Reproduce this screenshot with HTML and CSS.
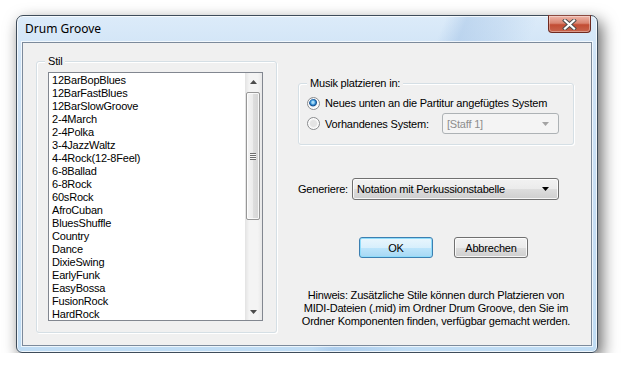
FILE: index.html
```html
<!DOCTYPE html>
<html lang="de">
<head>
  <meta charset="UTF-8">
  <title>Drum Groove</title>
  <link rel="stylesheet" href="styles.css">
</head>
<body>
  <div class="window">
    <div class="titlebar">
      <span class="title">Drum Groove</span>
      <button class="close" title="Schließen">
        <svg width="15" height="11" viewBox="0 0 15 11">
          <path d="M3 1.5 L12 9.5 M12 1.5 L3 9.5" stroke="#4b4b4b" stroke-width="4" stroke-linecap="square"/>
          <path d="M3 1.5 L12 9.5 M12 1.5 L3 9.5" stroke="#fff" stroke-width="2.2" stroke-linecap="square"/>
        </svg>
      </button>
    </div>

    <div class="client">
      <div class="col-left">
        <div class="group group-style">
          <div class="group-title">Stil</div>
          <div class="listbox">
            <ul class="items">
              <li>12BarBopBlues</li>
              <li>12BarFastBlues</li>
              <li>12BarSlowGroove</li>
              <li>2-4March</li>
              <li>2-4Polka</li>
              <li>3-4JazzWaltz</li>
              <li>4-4Rock(12-8Feel)</li>
              <li>6-8Ballad</li>
              <li>6-8Rock</li>
              <li>60sRock</li>
              <li>AfroCuban</li>
              <li>BluesShuffle</li>
              <li>Country</li>
              <li>Dance</li>
              <li>DixieSwing</li>
              <li>EarlyFunk</li>
              <li>EasyBossa</li>
              <li>FusionRock</li>
              <li>HardRock</li>
            </ul>
            <div class="scrollbar">
              <div class="sb-btn">
                <svg width="7" height="4" viewBox="0 0 7 4"><path d="M0 4 L3.5 0 L7 4 Z" fill="#4d4d4d"/></svg>
              </div>
              <div class="sb-track">
                <div class="sb-thumb"><span class="grip"></span></div>
              </div>
              <div class="sb-btn">
                <svg width="7" height="4" viewBox="0 0 7 4"><path d="M0 0 L7 0 L3.5 4 Z" fill="#4d4d4d"/></svg>
              </div>
            </div>
          </div>
        </div>
      </div>

      <div class="col-right">
        <div class="group group-place">
          <div class="group-title">Musik platzieren in:</div>
          <div class="radio-row radio-first">
            <span class="radio checked"></span>
            <span>Neues unten an die Partitur angefügtes System</span>
          </div>
          <div class="radio-row">
            <span class="radio"></span>
            <span class="radio-label">Vorhandenes System:</span>
            <div class="combo combo-disabled">
              <span>[Staff 1]</span>
              <svg width="7" height="4" viewBox="0 0 7 4"><path d="M0 0 L7 0 L3.5 4 Z" fill="#a3a3a3"/></svg>
            </div>
          </div>
        </div>

        <div class="field-row">
          <span class="field-label">Generiere:</span>
          <div class="combo combo-wide">
            <span>Notation mit Perkussionstabelle</span>
            <svg width="7" height="4" viewBox="0 0 7 4"><path d="M0 0 L7 0 L3.5 4 Z" fill="#000"/></svg>
          </div>
        </div>

        <div class="button-row">
          <button class="btn btn-default">OK</button>
          <button class="btn">Abbrechen</button>
        </div>

        <p class="hint">Hinweis: Zusätzliche Stile können durch Platzieren von<br>MIDI-Dateien (.mid) im Ordner Drum Groove, den Sie im<br>Ordner Komponenten finden, verfügbar gemacht werden.</p>
      </div>
    </div>
  </div>
</body>
</html>
```

FILE: styles.css
```css
body {
  margin: 0;
  background: #fff;
  font-family: "Liberation Sans", Arial, sans-serif;
  font-size: 11px;
  letter-spacing: -0.2px;
  color: #000;
}

.window {
  box-sizing: border-box;
  width: 582px;
  height: 338px;
  margin: 15px 0 0 16px;
  border: 1px solid #3e4c5a;
  border-radius: 7px 7px 6px 6px;
  background:
    linear-gradient(112deg, transparent 60%, rgba(140, 178, 222, 0.35) 63%, rgba(140, 178, 222, 0.2) 68%, transparent 73%),
    linear-gradient(#dcebf9, #cfe3f6 12%, #c6ddf3 60%, #bfdcf4);
  box-shadow: 4px 6px 16px rgba(0, 0, 0, 0.6), inset 0 0 0 1px rgba(255, 255, 255, 0.75);
  display: flex;
  flex-direction: column;
}

.titlebar {
  height: 26px;
  display: flex;
  justify-content: space-between;
  align-items: flex-start;
}

.title {
  font-family: "Noto Sans", sans-serif;
  font-size: 12px;
  letter-spacing: 0;
  line-height: 26px;
  padding-left: 8px;
}

.close {
  width: 43px;
  height: 18px;
  margin: -1px 6px 0 0;
  padding: 0;
  border: 1px solid #6f2a20;
  border-top-color: #8a4a40;
  border-radius: 0 0 4px 4px;
  background: linear-gradient(#efb5a8 0%, #d98571 45%, #c24d34 55%, #c8644c 100%);
  box-shadow: inset 0 0 0 1px rgba(255, 255, 255, 0.35);
  display: flex;
  align-items: center;
  justify-content: center;
}

.client {
  box-sizing: border-box;
  height: 304px;
  margin: 0 5px;
  border: 1px solid #7c8a9b;
  background: #f0f0f0;
  box-shadow: 0 0 0 1px rgba(255, 255, 255, 0.7);
  display: flex;
  padding-left: 13px;
  gap: 21px;
}

.group {
  border: 1px solid #d5dfe5;
  border-radius: 3px;
  box-shadow: inset 1px 1px 0 #fff, 1px 1px 0 #fff;
}

.group-title {
  display: table;
  margin: -7px 0 0;
  padding: 0 3px;
  line-height: 13px;
  background: #f0f0f0;
}

.col-left {
  width: 241px;
}

.group-style {
  margin-top: 18px;
  padding: 0 0 11px 11px;
}

.group-style .group-title {
  margin-left: -3px;
}

.listbox {
  box-sizing: border-box;
  width: 215px;
  height: 249px;
  margin-top: 4px;
  border: 1px solid #828790;
  background: #fff;
  display: flex;
  overflow: hidden;
}

.items {
  flex: 1;
  margin: 0;
  padding: 1px 0 0 3px;
  list-style: none;
}

.items li {
  height: 13px;
  line-height: 13px;
  white-space: nowrap;
}

.scrollbar {
  width: 17px;
  display: flex;
  flex-direction: column;
  background: linear-gradient(90deg, #e3e3e3, #f4f4f4 25%, #f4f4f4 75%, #e8e8e8);
}

.sb-btn {
  height: 17px;
  display: flex;
  align-items: center;
  justify-content: center;
}

.sb-track {
  flex: 1;
}

.sb-thumb {
  box-sizing: border-box;
  height: 128px;
  margin: 2px 2px 0 1px;
  border: 1px solid #979797;
  border-radius: 2px;
  background: linear-gradient(90deg, #f4f4f4, #ececec 50%, #dedede 51%, #d5d5d5);
  box-shadow: inset 0 0 0 1px rgba(255, 255, 255, 0.8);
  display: flex;
  align-items: center;
  justify-content: center;
}

.grip {
  width: 6px;
  height: 7px;
  background: repeating-linear-gradient(#6f6f6f 0 1px, #f8f8f8 1px 2px);
}

.col-right {
  width: 276px;
}

.group-place {
  margin-top: 40px;
  padding: 0 0 10px 8px;
}

.radio-row {
  display: flex;
  align-items: center;
  height: 21px;
}

.radio-first {
  margin-top: 3px;
  height: 20px;
}

.radio {
  box-sizing: border-box;
  width: 13px;
  height: 13px;
  margin-right: 5px;
  border: 1px solid #8a8c8e;
  border-radius: 50%;
  background: radial-gradient(circle at 50% 50%, #e4e4e4 0 3px, #f2f2f2 4px, #fbfbfb);
  box-shadow: inset 0 0 0 1px #fff;
}

.radio.checked {
  background: radial-gradient(circle at 45% 40%, #a8dcf8 0 1px, #2f8ad0 2.5px, #164f8e 3.5px, #f5f5f5 4.5px, #fbfbfb);
}

.radio-label {
  width: 117px;
}

.combo {
  box-sizing: border-box;
  height: 21px;
  padding: 0 9px 0 4px;
  border: 1px solid #707070;
  border-radius: 3px;
  background: linear-gradient(#f2f2f2 0%, #ebebeb 50%, #dddddd 51%, #cfcfcf 100%);
  box-shadow: inset 0 0 0 1px rgba(255, 255, 255, 0.8);
  display: flex;
  align-items: center;
  justify-content: space-between;
}

.combo-disabled {
  width: 117px;
  border-color: #adb2b5;
  background: #f4f4f4;
  color: #8d8d8d;
  box-shadow: none;
}

.field-row {
  display: flex;
  align-items: center;
  margin-top: 33px;
}

.field-label {
  width: 54px;
}

.combo-wide {
  width: 207px;
  height: 22px;
}

.button-row {
  display: flex;
  gap: 21px;
  margin: 37px 0 0 61px;
}

.btn {
  width: 74px;
  height: 21px;
  padding: 0;
  border: 1px solid #707070;
  border-radius: 3px;
  background: linear-gradient(#f2f2f2 0%, #ebebeb 50%, #dddddd 51%, #cfcfcf 100%);
  box-shadow: inset 0 0 0 1px rgba(255, 255, 255, 0.8);
  font: inherit;
  letter-spacing: inherit;
  color: #000;
}

.btn-default {
  border-color: #3c7fb1;
  background: linear-gradient(#e9f6fd 0%, #d8effc 50%, #bde5fb 51%, #a7d8f4 100%);
  box-shadow: inset 0 0 0 1px #8fdcfa;
}

.hint {
  margin: 31px 0 0;
  line-height: 13px;
  text-align: center;
}
```
